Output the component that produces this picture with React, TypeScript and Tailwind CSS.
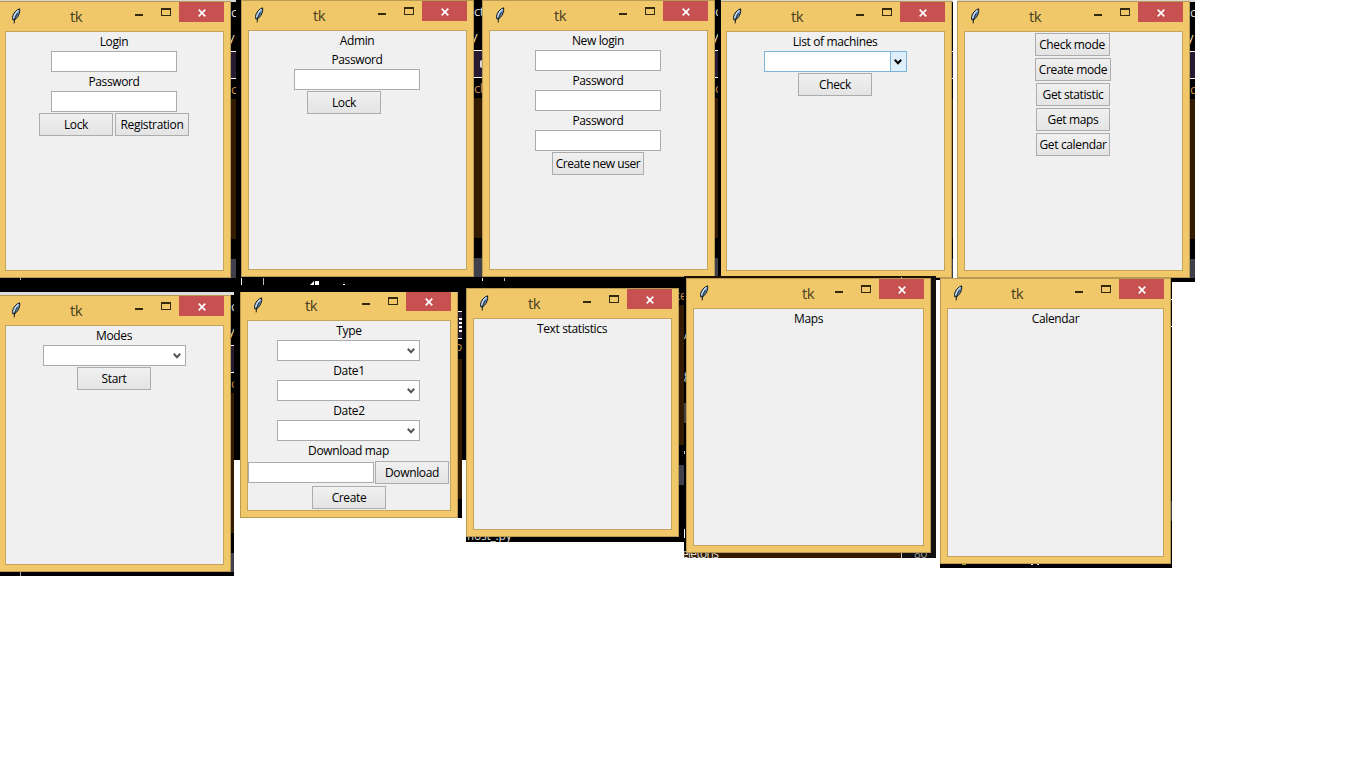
import type { ReactNode } from "react";

function Feather() {
  return (
    <svg className="mt-[6px] ml-[12px] h-[16px] w-[11px] shrink-0" viewBox="0 0 11 16">
      <path d="M8.6 0.8 C5.2 1.8 2 5.4 1.5 9.4 L1.9 12 L3.2 12 C6.2 10.6 8.3 6.5 8.7 3.5 Z" fill="#6a98c8" stroke="#15181c" strokeWidth="1" />
      <path d="M7.4 2.2 C4.8 4.2 3.2 7 2.7 10.4" fill="none" stroke="#d3e2ee" strokeWidth="1.2" />
      <path d="M6.4 5.4 C4.8 8 3.4 10.6 3.1 15.4" fill="none" stroke="#15181c" strokeWidth="1" />
    </svg>
  );
}

function TkWindow({ place, title, children }: { place: string; title: string; children?: ReactNode }) {
  return (
    <section className={`absolute flex flex-col border border-[#b89a55] bg-[#f0c86a] px-[6px] pb-[6px] ${place}`}>
      <header className="-mx-[6px] flex h-[29px] shrink-0 items-start">
        <Feather />
        <h1 className={`mt-[3px] text-[15px] leading-[22px] tracking-[-0.6px] text-[#4b3e22] ${title}`}>tk</h1>
        <div className="mr-[6px] ml-auto flex items-start">
          <span className="mt-[12px] h-[2px] w-[8px] bg-[#33290f]" />
          <span className="mt-[6px] ml-[18px] h-[8px] w-[10px] border border-t-2 border-[#33290f]" />
          <span className="ml-[8px] flex h-[20px] w-[45px] items-center justify-center bg-[#c75050]">
            <svg className="mt-px h-[8px] w-[8px]" viewBox="0 0 8 8">
              <path d="M0.7 0.7 L7.3 7.3 M7.3 0.7 L0.7 7.3" stroke="#fff" strokeWidth="1.7" />
            </svg>
          </span>
        </div>
      </header>
      <div className="flex flex-1 flex-col items-center border border-[#c4a560] bg-[#f0f0f0] pr-px">{children}</div>
    </section>
  );
}

function Label({ nudge = "", children }: { nudge?: string; children: ReactNode }) {
  return <div className={`h-[19px] text-[12px] leading-[20px] whitespace-nowrap ${nudge}`}>{children}</div>;
}

function Entry() {
  return <div className="h-[21px] w-[126px] shrink-0 border border-[#ababab] bg-white" />;
}

function Combo({ active = false }: { active?: boolean }) {
  return (
    <div className={`flex h-[21px] w-[143px] shrink-0 justify-end border bg-white ${active ? "border-[#7eb4d8]" : "border-[#ababab]"}`}>
      <div className={`flex w-[16px] items-center justify-center ${active ? "border-l border-[#7eb4d8] bg-[#deeefb]" : ""}`}>
        <svg className="mt-px h-[6px] w-[8px]" viewBox="0 0 8 6">
          <path d="M0.8 0.8 L4 4.2 L7.2 0.8" fill="none" stroke={active ? "#000" : "#555"} strokeWidth="2" />
        </svg>
      </div>
    </div>
  );
}

function Button({ size = "w-[74px]", children }: { size?: string; children: ReactNode }) {
  return (
    <button className={`m-px h-[23px] shrink-0 border border-[#acacac] bg-linear-to-b from-[#f0f0f0] to-[#e4e4e4] text-center text-[12px] leading-[22px] whitespace-nowrap ${size}`}>
      <span className="-mx-2">{children}</span>
    </button>
  );
}

/* A rectangular capture of the desktop with one window on it. */
function Capture({ place, children }: { place: string; children?: ReactNode }) {
  return <div className={`absolute overflow-hidden bg-black ${place}`}>{children}</div>;
}

/* The narrow band of the code editor that shows beside a window. */
function EditorBand({ place, first = "", second = "", last = "" }: { place: string; first?: string; second?: string; last?: string }) {
  return (
    <div className={`absolute flex flex-col overflow-hidden text-[13px] leading-[16px] whitespace-nowrap ${place}`}>
      <div className="h-[28px] pt-[3px] text-[#dcdcdc]">{first}</div>
      <div className="-ml-[3px] h-[22px] text-[#e6dca8]">{second}</div>
      <div className="h-[28px] shrink-0 border-y border-white bg-[#281a30]" />
      <div className="h-[20px] shrink-0 pt-[2px] text-[#cc8a43]">{last}</div>
      <div className="h-[140px] shrink-0 bg-[#331b00]" />
      <div className="mt-[20px] h-[19px] shrink-0 bg-[#40404c]" />
    </div>
  );
}

function Mark({ place }: { place: string }) {
  return <i className={`absolute ${place}`} />;
}

function Scrap({ place, children }: { place: string; children: ReactNode }) {
  return <span className={`absolute text-[12px] leading-[14px] whitespace-nowrap ${place}`}>{children}</span>;
}

export default function App() {
  return (
    <main className="relative h-[768px] w-[1366px] overflow-hidden bg-white font-['Open_Sans','Noto_Sans',sans-serif] tracking-[-0.36px] text-black">
      <div className="absolute top-0 left-0 h-[460px] w-[684px] bg-black" />

      <Capture place="left-0 top-0 h-[285px] w-[236px]">
        <Mark place="left-0 top-0 h-[2px] w-[236px] bg-[#d9d6cf]" />
        <EditorBand place="left-[231px] top-[1px] w-[5px]" first="ct" second="y" last="c" />
        <Mark place="left-[20px] top-[278px] h-[2px] w-px bg-[#aaa]" />
        <TkWindow place="-left-[2px] top-[1px] h-[277px] w-[233px]" title="ml-[48px]">
          <Label>Login</Label>
          <Entry />
          <Label>Password</Label>
          <Entry />
          <div className="flex">
            <Button>Lock</Button>
            <Button>Registration</Button>
          </div>
        </TkWindow>
      </Capture>

      <Capture place="left-[241px] top-0 h-[285px] w-[241px]">
        <EditorBand place="left-[233px] top-0 w-[8px]" first="ct" second="y" last="ch" />
        <Mark place="left-[239px] top-[60px] h-[8px] w-[2px] rounded-l bg-[#ddd]" />
        <Mark place="left-0 top-[278px] h-[7px] w-px bg-white" />
        <Mark place="left-[22px] top-[278px] h-[7px] w-px bg-[#bbb]" />
        <Mark place="left-[69px] top-[281px] h-[4px] w-[4px] bg-white [clip-path:polygon(100%_0,100%_100%,0_100%)]" />
        <Mark place="left-[74px] top-[281px] h-[4px] w-[4px] bg-white" />
        <Mark place="left-[102px] top-[284px] h-px w-[2px] bg-white" />
        <TkWindow place="left-0 top-0 h-[277px] w-[233px]" title="ml-[48px]">
          <Label>Admin</Label>
          <Label>Password</Label>
          <Entry />
          <div className="mr-[26px] flex">
            <Button>Lock</Button>
          </div>
        </TkWindow>
      </Capture>

      <Capture place="left-[482px] top-0 h-[281px] w-[239px]">
        <EditorBand place="left-[233px] top-0 w-[3px]" first="c" second="y" last="c" />
        <Mark place="left-0 top-[278px] h-[3px] w-px bg-white" />
        <Mark place="left-[22px] top-[278px] h-[3px] w-px bg-[#bbb]" />
        <TkWindow place="left-0 top-0 h-[277px] w-[233px]" title="ml-[48px]">
          <Label>New login</Label>
          <Entry />
          <Label>Password</Label>
          <Entry />
          <Label>Password</Label>
          <Entry />
          <Button size="w-[92px] tracking-[-0.45px]">Create new user</Button>
        </TkWindow>
      </Capture>

      <Capture place="left-[721px] top-0 h-[280px] w-[232px]">
        <Mark place="left-0 top-0 h-[2px] w-[232px] bg-[#d9d6cf]" />
        <EditorBand place="left-[231px] top-[1px] w-px" />
        <TkWindow place="-left-[2px] top-[1px] h-[277px] w-[233px]" title="ml-[48px]">
          <Label>List of machines</Label>
          <Combo active />
          <Button>Check</Button>
        </TkWindow>
      </Capture>

      <Capture place="left-[936px] top-[278px] h-[2px] w-[17px]" />

      <Capture place="left-[957px] top-0 h-[282px] w-[238px]">
        <Mark place="left-0 top-0 h-[2px] w-[238px] bg-[#d9d6cf]" />
        <EditorBand place="left-[233px] top-[1px] w-[5px]" first="ct" second="y" last="c" />
        <TkWindow place="left-0 top-[1px] h-[277px] w-[233px]" title="ml-[48px]">
          <Button size="w-[75px] -translate-x-px">Check mode</Button>
          <Button size="w-[76px]">Create mode</Button>
          <Button>Get statistic</Button>
          <Button>Get maps</Button>
          <Button>Get calendar</Button>
        </TkWindow>
      </Capture>

      <Capture place="left-0 top-[292px] h-[284px] w-[234px]">
        <Mark place="left-0 top-0 h-[3px] w-[234px] bg-[#dedede]" />
        <EditorBand place="left-[231px] top-[3px] w-[3px]" first="c" second="y" last="c" />
        <Mark place="left-[20px] top-[280px] h-[4px] w-px bg-[#aaa]" />
        <TkWindow place="-left-[2px] top-[3px] h-[277px] w-[233px]" title="ml-[48px]">
          <Label>Modes</Label>
          <Combo />
          <Button>Start</Button>
        </TkWindow>
      </Capture>

      <Capture place="left-[240px] top-[292px] h-[226px] w-[222px]">
        <Mark place="left-[218px] top-[19px] h-[28px] w-[4px] border-y border-white bg-[#281a30]" />
        <Mark place="left-[219px] top-[26px] h-[14px] w-[3px] bg-[repeating-linear-gradient(#fff_0_2px,#281a30_2px_4px)]" />
        <Scrap place="left-[215px] top-[48px] text-[#cc8a43]">o</Scrap>
        <Mark place="left-[218px] top-[67px] h-[140px] w-[4px] bg-[#331b00]" />
        <TkWindow place="left-0 -top-[2px] h-[228px] w-[218px]" title="ml-[41px]">
          <Label nudge="-mr-px">Type</Label>
          <Combo />
          <Label nudge="-mr-px">Date1</Label>
          <Combo />
          <Label nudge="-mr-px">Date2</Label>
          <Combo />
          <Label>Download map</Label>
          <div className="-mr-px flex items-center">
            <Entry />
            <Button>Download</Button>
          </div>
          <div className="-mr-px flex">
            <Button>Create</Button>
          </div>
        </TkWindow>
      </Capture>

      <Capture place="left-[466px] top-[288px] h-[254px] w-[218px]">
        <Scrap place="left-[210px] top-[1px] text-[#cc8a43]">te</Scrap>
        <Mark place="left-[213px] top-[17px] h-[140px] w-[5px] bg-[#331b00]" />
        <Mark place="left-[213px] top-[177px] h-[20px] w-[5px] bg-[#40404c]" />
        <Scrap place="-left-[3px] top-[241px] tracking-[-0.2px] text-[#ddd]">most_.py</Scrap>
        <TkWindow place="left-0 top-0 h-[249px] w-[213px]" title="ml-[38px]">
          <Label>Text statistics</Label>
        </TkWindow>
      </Capture>

      <Capture place="left-[684px] top-[276px] h-[282px] w-[252px]">
        <Mark place="left-0 top-0 h-[2px] w-[247px] bg-[#211000]" />
        <Mark place="left-[217px] top-[1px] h-px w-px bg-[#ccc]" />
        <Scrap place="left-0 top-[52px] text-[#ddd]">A</Scrap>
        <Scrap place="left-0 top-[92px] text-[#ddd]">g</Scrap>
        <Mark place="left-0 top-[127px] h-[20px] w-[2px] bg-[#444]" />
        <Mark place="left-0 top-[175px] h-[3px] w-px bg-[#ccc]" />
        <Mark place="left-0 top-[253px] h-[9px] w-px bg-white" />
        <Mark place="left-0 top-[277px] h-[5px] w-[217px] bg-[#331b00]" />
        <Mark place="left-[217px] top-[277px] h-[5px] w-px bg-[#ccc]" />
        <Mark place="left-[218px] top-[277px] h-[5px] w-[34px] bg-[#111]" />
        <Mark place="left-[247px] top-0 h-[282px] w-[5px] bg-[#111]" />
        <Scrap place="-left-[2px] top-[271px] tracking-[-0.7px] text-[#ddd]">eletons</Scrap>
        <Scrap place="left-[230px] top-[271px] text-[#999]">80</Scrap>
        <TkWindow place="left-[2px] top-[2px] h-[275px] w-[245px]" title="ml-[92px]">
          <Label nudge="-mr-px">Maps</Label>
        </TkWindow>
      </Capture>

      <Capture place="left-[940px] top-[278px] h-[290px] w-[232px]">
        <Mark place="left-[231px] top-[21px] h-px w-px bg-white" />
        <Mark place="left-[231px] top-[48px] h-px w-px bg-white" />
        <Mark place="left-[231px] top-[223px] h-[20px] w-px bg-[#40404c]" />
        <Mark place="left-[22px] top-[286px] h-px w-[4px] bg-[#b5a030]" />
        <Mark place="left-[91px] top-[286px] h-px w-[2px] bg-[#ddd]" />
        <Mark place="left-[97px] top-[286px] h-px w-[2px] bg-[#ddd]" />
        <TkWindow place="left-0 top-0 h-[286px] w-[231px]" title="ml-[47px]">
          <Label nudge="-mr-px">Calendar</Label>
        </TkWindow>
      </Capture>
    </main>
  );
}
